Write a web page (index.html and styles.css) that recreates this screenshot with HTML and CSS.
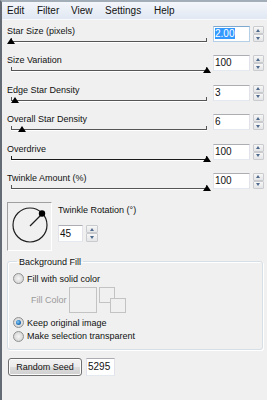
FILE: index.html
```html
<!DOCTYPE html>
<html>
<head>
<meta charset="utf-8">
<link rel="stylesheet" href="styles.css">
</head>
<body>
<div class="window">
  <div class="menubar">
    <span>Edit</span><span>Filter</span><span>View</span><span>Settings</span><span>Help</span>
  </div>
  <div class="content">
    <div class="row">
      <div class="slider">
        <div class="label">Star Size (pixels)</div>
        <div class="track"><div class="thumb" style="left:0px"></div></div>
      </div>
      <div class="textbox focused"><span class="sel">2.00</span></div>
      <div class="spin"><div class="up"></div><div class="down"></div></div>
    </div>
    <div class="row">
      <div class="slider">
        <div class="label">Size Variation</div>
        <div class="track"><div class="thumb" style="left:196px"></div></div>
      </div>
      <div class="textbox">100</div>
      <div class="spin"><div class="up"></div><div class="down"></div></div>
    </div>
    <div class="row">
      <div class="slider">
        <div class="label">Edge Star Density</div>
        <div class="track"><div class="thumb" style="left:4.5px"></div></div>
      </div>
      <div class="textbox">3</div>
      <div class="spin"><div class="up"></div><div class="down"></div></div>
    </div>
    <div class="row">
      <div class="slider">
        <div class="label">Overall Star Density</div>
        <div class="track"><div class="thumb" style="left:11.5px"></div></div>
      </div>
      <div class="textbox">6</div>
      <div class="spin"><div class="up"></div><div class="down"></div></div>
    </div>
    <div class="row">
      <div class="slider">
        <div class="label">Overdrive</div>
        <div class="track dark"><div class="thumb" style="left:196px"></div></div>
      </div>
      <div class="textbox">100</div>
      <div class="spin"><div class="up"></div><div class="down"></div></div>
    </div>
    <div class="row">
      <div class="slider">
        <div class="label">Twinkle Amount (%)</div>
        <div class="track"><div class="thumb" style="left:196px"></div></div>
      </div>
      <div class="textbox">100</div>
      <div class="spin"><div class="up"></div><div class="down"></div></div>
    </div>

    <div class="rotation">
      <div class="dial">
        <svg width="43" height="47" viewBox="0 0 43 47">
          <circle cx="22" cy="22" r="17" fill="none" stroke="#1e1e1e" stroke-width="1.2"/>
          <line x1="22" y1="23" x2="33" y2="12" stroke="#1e1e1e" stroke-width="1.2"/>
          <circle cx="34" cy="10.5" r="3.2" fill="#000"/>
        </svg>
      </div>
      <div class="rot-right">
        <div class="label">Twinkle Rotation (°)</div>
        <div class="rot-input">
          <div class="textbox small">45</div>
          <div class="spin tall"><div class="up"></div><div class="down"></div></div>
        </div>
      </div>
    </div>

    <fieldset class="group">
      <legend>Background Fill</legend>
      <div class="radio-row"><span class="radio"></span><span>Fill with solid color</span></div>
      <div class="fill-row">
        <span class="fill-label">Fill Color</span>
        <div class="swatch"></div>
        <div class="swap"><div class="sq a"></div><div class="sq b"></div></div>
      </div>
      <div class="radio-row r2"><span class="radio on"></span><span>Keep original image</span></div>
      <div class="radio-row r3"><span class="radio"></span><span>Make selection transparent</span></div>
    </fieldset>

    <div class="seed">
      <div class="button">Random Seed</div>
      <div class="textbox seedbox">5295</div>
    </div>
  </div>
</div>
</body>
</html>
```
FILE: styles.css
```css
* { box-sizing: border-box; }
html, body {
  margin: 0;
  padding: 0;
  background: #f0f0f0;
}
body {
  font-family: "Liberation Sans", Arial, sans-serif;
  font-size: 9px;
  color: #111;
}
.window {
  width: 267px;
  height: 400px;
  border-left: 2px solid #646b74;
  border-top: 2px solid #a3adb8;
  background: #f0f0f0;
  overflow: hidden;
}
.menubar {
  height: 18px;
  display: grid;
  grid-template-columns: 30px 34px 34px 49px auto;
  align-items: center;
  padding-left: 5px;
  font-size: 10px;
  line-height: 12px;
  background: linear-gradient(#f3f6fb, #e1e8f2);
  border-bottom: 1px solid #f7f9fc;
}
.content {
  padding: 1px 0 0 5px;
}
.row {
  height: 29.4px;
  display: grid;
  grid-template-columns: 203px 37px 11px;
  column-gap: 3px;
  align-items: start;
}
.label {
  line-height: 12px;
  white-space: nowrap;
}
.slider .label {
  margin-top: 4px;
}
.track {
  position: relative;
  margin-left: 4px;
  width: 196px;
  height: 8px;
}
.track::before {
  content: "";
  position: absolute;
  left: 0;
  right: 0;
  top: 1px;
  height: 3px;
  border: 1px solid #555;
  border-top: none;
  box-shadow: 0 1px 0 #ffffff;
}
.track.dark::before {
  border-color: #1a1a1a;
}
.thumb {
  position: absolute;
  top: 1px;
  width: 0;
  height: 0;
  margin-left: -4.5px;
  border-left: 4.5px solid transparent;
  border-right: 4.5px solid transparent;
  border-bottom: 6px solid #000;
}
.textbox {
  margin-top: 5px;
  height: 16px;
  background: #fff;
  border: 1px solid #e2e3ea;
  border-top-color: #abadb3;
  border-bottom-color: #e3e9ef;
  font-size: 10px;
  line-height: 14px;
  padding-left: 1px;
  white-space: nowrap;
}
.textbox.focused {
  border-color: #b5cfe7;
  border-top-color: #7fa8cf;
}
.sel {
  background: #3399ff;
  color: #fff;
  padding: 0 1px 0 0;
}
.spin {
  margin-top: 5px;
  height: 16px;
  display: flex;
  flex-direction: column;
}
.spin .up, .spin .down {
  flex: 1;
  position: relative;
  border: 1px solid #c9cbce;
  background: linear-gradient(#f7f7f7, #e4e5e7);
  border-radius: 1px;
}
.spin .up::after, .spin .down::after {
  content: "";
  position: absolute;
  left: 50%;
  top: 50%;
  margin-left: -2.5px;
  margin-top: -1.5px;
  border-left: 2.5px solid transparent;
  border-right: 2.5px solid transparent;
}
.spin .up::after { border-bottom: 3px solid #4f6a8c; }
.spin .down::after { border-top: 3px solid #4f6a8c; }

.rotation {
  display: flex;
  margin-top: 4.6px;
}
.dial {
  width: 45px;
  height: 49px;
  border: 1px solid #ffffff;
  border-top-color: #a0a0a0;
  border-left-color: #a0a0a0;
}
.dial svg { display: block; }
.rot-right {
  margin-left: 6px;
}
.rot-right .label {
  margin-top: 2px;
}
.rot-input {
  display: flex;
  margin-top: 9px;
}
.textbox.small {
  margin-top: 0;
  width: 25px;
  height: 17px;
  line-height: 15px;
}
.spin.tall {
  margin-top: 0;
  margin-left: 3px;
  width: 12px;
  height: 17px;
}

.group {
  margin: 5px 0 0 0;
  width: 256px;
  padding: 5px 4px 7px 5px;
  border: 1px solid #d5dfe5;
  border-radius: 3px;
  box-shadow: inset 1px 1px 0 #ffffff, 1px 1px 0 #ffffff;
}
.group legend {
  padding: 0 2px;
  margin-left: 4px;
  line-height: 12px;
  font-size: 9px;
}
.radio-row {
  display: flex;
  align-items: center;
  height: 12px;
  white-space: nowrap;
}
.radio-row.r2 { margin-top: 4px; }
.radio-row.r3 { margin-top: 1.5px; }
.radio {
  width: 11px;
  height: 11px;
  border-radius: 50%;
  border: 1px solid #8f9192;
  background: radial-gradient(circle at 50% 50%, #f6f6f6 0%, #dcdcdc 60%, #c8c8c8 100%);
  margin-right: 3px;
  position: relative;
  flex: none;
}
.radio.on::after {
  content: "";
  position: absolute;
  left: 2px;
  top: 2px;
  width: 5px;
  height: 5px;
  border-radius: 50%;
  background: radial-gradient(circle at 40% 40%, #8fd0f5 0%, #2a7fc8 50%, #123f7a 100%);
}
.fill-row {
  display: flex;
  align-items: center;
  margin-top: 2px;
  height: 26px;
}
.fill-label {
  margin-left: 18px;
  color: #9a9a9a;
  width: 38px;
}
.swatch {
  width: 28px;
  height: 26px;
  border: 1px solid #c3c3c3;
  background: #f0f0f0;
}
.swap {
  position: relative;
  margin-left: 2px;
  width: 27px;
  height: 26px;
}
.sq {
  position: absolute;
  border: 1px solid #c3c3c3;
  background: #f0f0f0;
}
.sq.a { left: 0; top: 0; width: 16px; height: 16px; }
.sq.b { left: 11px; top: 11px; width: 16px; height: 15px; }

.seed {
  display: flex;
  margin-top: 8px;
  align-items: flex-start;
}
.button {
  margin-left: 1px;
  width: 74px;
  height: 18px;
  border: 1px solid #707070;
  border-radius: 3px;
  background: linear-gradient(#f2f2f2 0%, #ebebeb 50%, #dddddd 51%, #cfcfcf 100%);
  box-shadow: inset 0 0 0 1px #fcfcfc;
  text-align: center;
  line-height: 16px;
  font-size: 9px;
}
.textbox.seedbox {
  margin-top: 0;
  margin-left: 4px;
  width: 29px;
  height: 18px;
  line-height: 16px;
}
```
